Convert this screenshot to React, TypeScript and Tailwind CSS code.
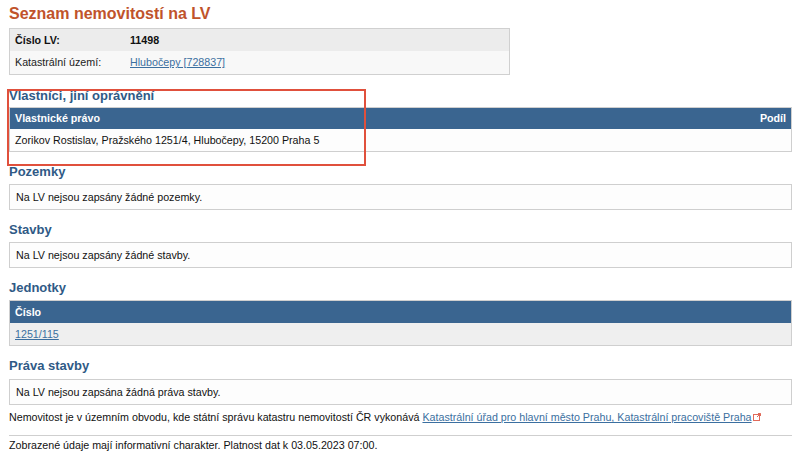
const font = "font-['Liberation_Sans',Arial,sans-serif]";

const Heading = ({ children, first }: { children: React.ReactNode; first?: boolean }) => (
  <h3
    className={`${first ? "mt-[13px] mb-[3px]" : "mt-3 mb-1"} h-4 text-[13px] leading-4 font-bold text-[#2f5a86]`}
  >
    {children}
  </h3>
);

const EmptyBox = ({ text }: { text: string }) => (
  <div className="h-[26px] border border-[#cfcfcf] bg-[#fdfdfd] px-[6px] flex items-center text-[10.7px] text-[#111]">
    {text}
  </div>
);

const ExternalIcon = () => (
  <svg width="8" height="8" viewBox="0 0 8 8" className="inline-block ml-[1px] align-[0px]">
    <rect x="0.5" y="1.5" width="6" height="6" fill="none" stroke="#e06a5a" strokeWidth="1" />
    <path d="M4 4 L7.5 0.5 M5 0.5 H7.5 V3" fill="none" stroke="#e06a5a" strokeWidth="1" />
  </svg>
);

export default function App() {
  return (
    <div className={`${font} relative w-[800px] h-[461px] bg-white pl-[9px] pr-[8px] text-[#111] overflow-hidden`}>
      <h2 className="pt-[5px] h-[28px] text-[16px] leading-[18px] font-bold text-[#c0532b]">
        Seznam nemovitostí na LV
      </h2>

      {/* hlavička LV */}
      <div className="w-[501px] border border-[#d0d0d0] text-[10.7px]">
        <div className="h-[22px] bg-[#ececec] flex items-center px-[5px]">
          <span className="w-[115px] font-bold">Číslo LV:</span>
          <span className="font-bold">11498</span>
        </div>
        <div className="h-[23px] bg-[#f8f8f8] flex items-center px-[5px]">
          <span className="w-[115px] text-[#222]">Katastrální území:</span>
          <a href="#" className="text-[#3b6fa0] underline">Hlubočepy [728837]</a>
        </div>
      </div>

      <Heading first>Vlastníci, jiní oprávnění</Heading>
      <div className="border border-[#cfcfcf]">
        <div className="h-[21px] bg-[#3a6590] text-white text-[10.7px] font-bold flex items-center justify-between px-[5px]">
          <span>Vlastnické právo</span>
          <span>Podíl</span>
        </div>
        <div className="h-[22px] bg-[#fdfdfd] flex items-center px-[5px] text-[10.7px]">
          Zorikov Rostislav, Pražského 1251/4, Hlubočepy, 15200 Praha 5
        </div>
      </div>

      <Heading>Pozemky</Heading>
      <EmptyBox text="Na LV nejsou zapsány žádné pozemky." />

      <Heading>Stavby</Heading>
      <EmptyBox text="Na LV nejsou zapsány žádné stavby." />

      <Heading>Jednotky</Heading>
      <div className="border border-[#cfcfcf]">
        <div className="h-[22px] bg-[#3a6590] text-white text-[10.7px] font-bold flex items-center px-[5px]">
          Číslo
        </div>
        <div className="h-[22px] bg-[#efefef] flex items-center px-[5px] text-[10.7px]">
          <a href="#" className="text-[#3b6fa0] underline">1251/115</a>
        </div>
      </div>

      <h3 className="mt-3 mb-[5px] h-4 text-[13px] leading-4 font-bold text-[#2f5a86]">Práva stavby</h3>
      <EmptyBox text="Na LV nejsou zapsána žádná práva stavby." />

      <p className="mt-[5px] text-[10.7px] leading-[14px]">
        Nemovitost je v územním obvodu, kde státní správu katastru nemovitostí ČR vykonává{" "}
        <a href="#" className="text-[#3b6fa0] underline">
          Katastrální úřad pro hlavní město Prahu, Katastrální pracoviště Praha
        </a>
        <ExternalIcon />
      </p>
      <hr className="mt-[11px] border-t border-[#cfcfcf]" />
      <p className="mt-[2px] text-[10.7px] leading-[14px]">
        Zobrazené údaje mají informativní charakter. Platnost dat k 03.05.2023 07:00.
      </p>

      {/* zvýraznění sekce vlastníků */}
      <div className="absolute left-[7px] top-[89px] w-[359px] h-[77px] border-2 border-[#e0503c] pointer-events-none" />
    </div>
  );
}
